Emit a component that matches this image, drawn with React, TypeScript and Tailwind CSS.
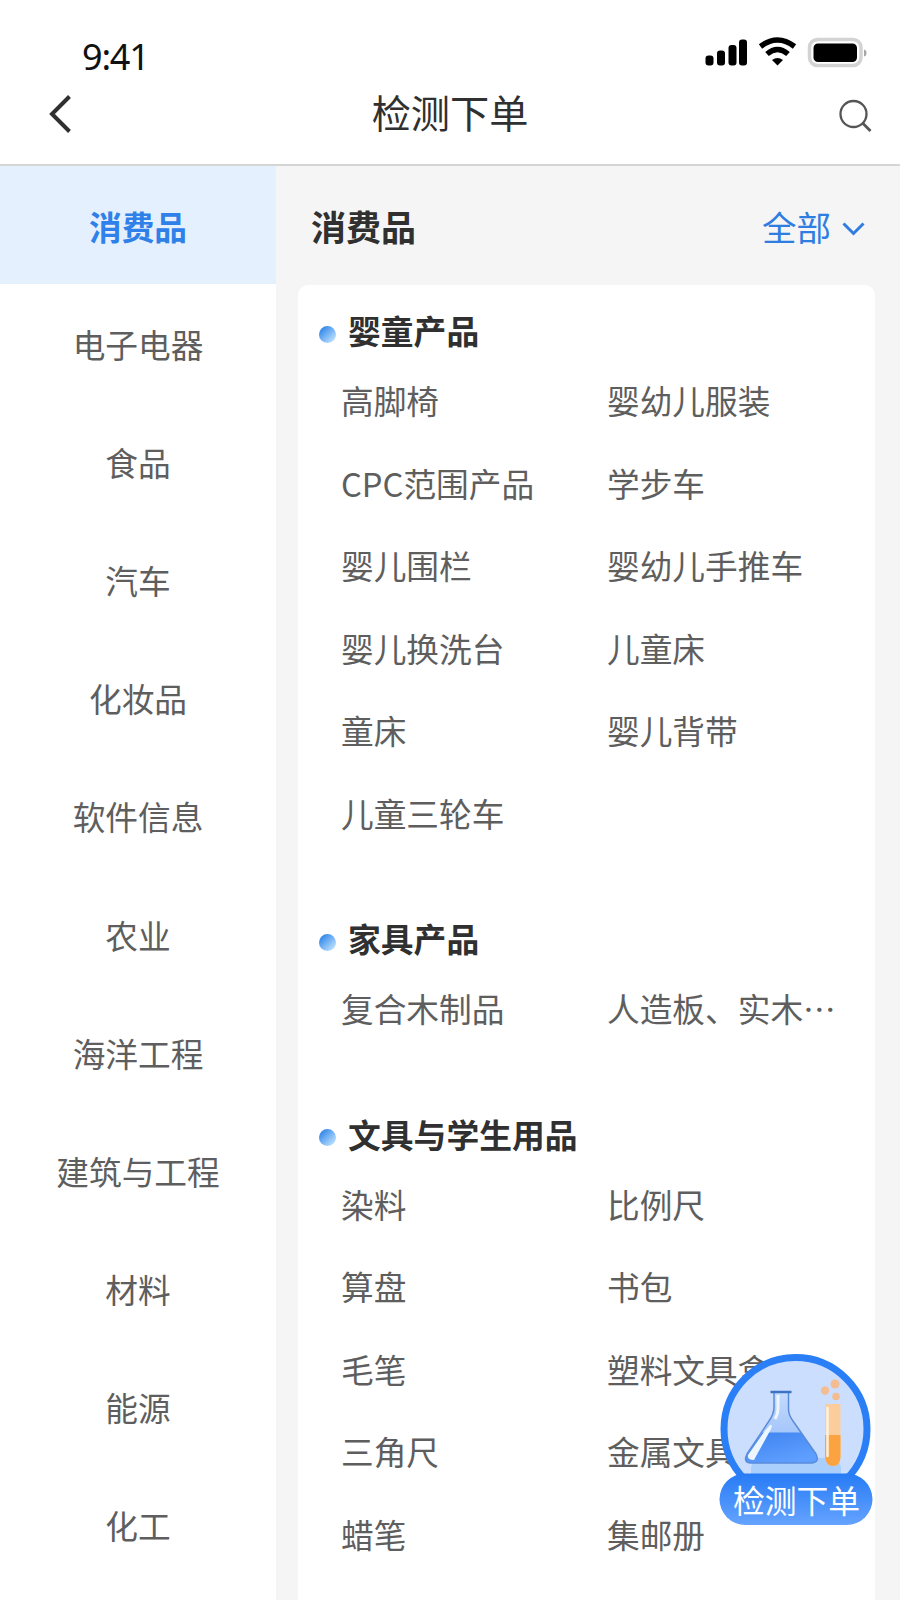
const categories = [
  '消费品', '电子电器', '食品', '汽车', '化妆品', '软件信息', '农业',
  '海洋工程', '建筑与工程', '材料', '能源', '化工',
];

const groups = [
  {
    title: '婴童产品',
    items: [
      '高脚椅', '婴幼儿服装', 'CPC范围产品', '学步车', '婴儿围栏', '婴幼儿手推车',
      '婴儿换洗台', '儿童床', '童床', '婴儿背带', '儿童三轮车',
    ],
  },
  { title: '家具产品', items: ['复合木制品', '人造板、实木⋯'] },
  {
    title: '文具与学生用品',
    items: [
      '染料', '比例尺', '算盘', '书包', '毛笔', '塑料文具盒',
      '三角尺', '金属文具', '蜡笔', '集邮册',
    ],
  },
];

function StatusIcons() {
  return (
    <svg className="block h-[32px] w-[166px]" viewBox="0 0 166 32">
      <rect x="0.5" y="19.5" width="8" height="10" rx="3" />
      <rect x="12" y="14.5" width="8" height="15" rx="3" />
      <rect x="23.5" y="9" width="8" height="20.500" rx="3" />
      <rect x="34" y="3.500" width="8" height="26" rx="3" />
      <path d="M55.500 10.500Q72.500 -2.500 89.500 10.500" fill="none" stroke="#000" strokeWidth="5.500" />
      <path d="M62 18Q72.500 9 83 18" fill="none" stroke="#000" strokeWidth="5.500" />
      <path d="M67 24Q72.500 20 78 24L72.500 29.500Z" />
      <rect x="104.500" y="3.500" width="51.500" height="26" rx="8" fill="none" stroke="#d3d3d3" strokeWidth="3.500" />
      <rect x="108.500" y="7.500" width="43.500" height="18.500" rx="4.500" />
      <path d="M159 13.500Q161.500 14 161.500 17T159 20.500Z" fill="#a6a6a6" />
    </svg>
  );
}

function OrderBadge() {
  return (
    <div className="absolute left-[719px] top-[1353px] h-[173px] w-[155px]">
      <svg className="block h-[173px] w-[155px]" viewBox="0 0 155 173">
        <defs>
          <linearGradient id="pill" x1="0" y1="0" x2="0" y2="1">
            <stop offset="0" stopColor="#267bf5" />
            <stop offset="1" stopColor="#65a3ff" />
          </linearGradient>
          <linearGradient id="glass" x1="0" y1="0" x2="0" y2="1">
            <stop offset="0" stopColor="#c3dafc" />
            <stop offset="1" stopColor="#8fb8fa" />
          </linearGradient>
          <linearGradient id="liquid" x1="0" y1="0" x2="0.6" y2="1">
            <stop offset="0" stopColor="#3d82ee" />
            <stop offset="1" stopColor="#5f9fff" />
          </linearGradient>
          <clipPath id="disc">
            <circle cx="76.500" cy="76" r="69" />
          </clipPath>
        </defs>
        <circle cx="76.500" cy="76" r="71.500" fill="#cbdefe" stroke="#2a7ff6" strokeWidth="7" />
        <g clipPath="url(#disc)">
          <rect x="32" y="105" width="90" height="30" rx="10" fill="#abcffc" />
        </g>
        <path d="M55 40H69.500V58Q70 63 74 68L97 101Q101 109 93 110H31Q24 109 28 101L50 68Q55 61 55 54Z" fill="url(#glass)" />
        <path d="M43.500 79.500H82L97 101Q101 109 93 110H31Q24 109 28 101Z" fill="url(#liquid)" />
        <path d="M55 40V54Q55 61 50 68L28 101Q24 109 31 110H93Q101 109 97 101L74 68Q69.500 62 69.500 56V40" fill="none" stroke="#5a8cda" strokeWidth="1.500" />
        <path d="M51 72L45 79L29 102Q28 107 35 107L52 76Q54 71 51 72Z" fill="#edf5ff" />
        <path d="M59 42V56Q59 61 56 66" fill="none" stroke="#edf5ff" strokeWidth="3" />
        <path d="M51.500 39H72.500" stroke="#3d71c4" strokeWidth="2.500" />
        <path d="M106 51H121.500V104Q121 113 114 113T106 104Z" fill="#fccd9c" />
        <path d="M106 82H121.500V104Q121 113 114 113T106 104Z" fill="#fba341" />
        <path d="M108.500 55V103" stroke="#fff1df" strokeWidth="2.500" strokeLinecap="round" />
        <circle cx="106" cy="37.500" r="4.200" fill="#f4bd91" />
        <circle cx="116" cy="31" r="4.500" fill="#f4bd91" />
        <circle cx="117" cy="43.500" r="3.800" fill="#f4bd91" />
        <rect x="0.500" y="120.500" width="153" height="51.500" rx="25.750" fill="url(#pill)" />
      </svg>
      <span className="absolute left-0 top-[120px] w-[155px] text-center text-[31.800px] leading-[52px] text-white">检测下单</span>
    </div>
  );
}

export default function App() {
  return (
    <div className="relative flex h-[1600px] w-[900px] flex-col overflow-hidden bg-[#f5f5f5] font-['Noto_Sans_CJK_SC',sans-serif]">
      <header className="flex h-[166px] shrink-0 flex-col border-b-2 border-[#d5d5d5] bg-white">
        <div className="flex h-[76px] shrink-0 items-start justify-between pl-[82px] pr-[29px] pt-[36px]">
          <span className="pt-[3px] font-['Noto_Sans','Open_Sans',sans-serif] text-[36px] leading-[36px] tracking-[-1.200px] text-[#111]">9:41</span>
          <StatusIcons />
        </div>
        <div className="flex h-[88px] items-start justify-between pl-[48px] pr-[28px]">
          <svg className="mt-[18px] h-[40px] w-[26px]" viewBox="0 0 26 40" fill="none" stroke="#303030" strokeWidth="4">
            <path d="M21.500 2.500L4 20L21.500 37.500" />
          </svg>
          <h1 className="mr-[12px] mt-[7px] text-[39.200px] leading-[56px] text-[#303030]">检测下单</h1>
          <svg className="mt-[22px] h-[36px] w-[34px]" viewBox="0 0 34 36" fill="none" stroke="#555" strokeWidth="2.300">
            <circle cx="15.500" cy="16" r="13" />
            <path d="M24.500 25L32.500 33" strokeWidth="2.800" />
          </svg>
        </div>
      </header>
      <div className="flex min-h-0 flex-1">
        <nav className="flex w-[276px] shrink-0 flex-col bg-white">
          {categories.map((name, i) => (
            <div
              key={name}
              className={
                i === 0
                  ? 'flex h-[118.100px] shrink-0 items-center justify-center bg-[#e4f0fe] text-[32.700px] font-bold text-[#2f80e8]'
                  : 'flex h-[118.100px] shrink-0 items-center justify-center pt-[1px] text-[32.700px] text-[#5e5e5e]'
              }
            >
              {name}
            </div>
          ))}
        </nav>
        <main className="flex flex-1 flex-col pl-[21.500px] pr-[25px]">
          <div className="flex h-[118.500px] shrink-0 items-center justify-between pl-[13.500px] pr-[10px] pt-px">
            <h2 className="text-[35px] font-bold text-[#303030]">消费品</h2>
            <div className="flex items-center gap-[11px] pt-[2px] text-[34.500px] text-[#2f7de0]">
              <span>全部</span>
              <svg className="mt-[4px] h-[14px] w-[23px]" viewBox="0 0 23 14" fill="none" stroke="#2f7de0" strokeWidth="3">
                <path d="M1.500 1.500L11.500 11.500L21.500 1.500" />
              </svg>
            </div>
          </div>
          <div className="flex flex-1 flex-col gap-[56px] rounded-t-[10px] bg-white pt-[16.500px]">
            {groups.map((g) => (
              <section key={g.title}>
                <div className="flex h-[57px] items-center gap-[12px] pl-[21.500px]">
                  <i className="mt-[9px] size-[17px] rounded-full bg-linear-to-br from-[#3b8eea] from-20% to-[#d3efff]" />
                  <h3 className="text-[32.800px] font-bold leading-[57px] text-[#303030]">{g.title}</h3>
                </div>
                <div className="grid grid-cols-[266px_266px] pl-[43.500px]">
                  {g.items.map((t) => (
                    <div key={t} className="h-[82.500px] whitespace-nowrap text-[32.700px] leading-[84.500px] text-[#5e5e5e]">{t}</div>
                  ))}
                </div>
              </section>
            ))}
          </div>
        </main>
      </div>
      <OrderBadge />
    </div>
  );
}
